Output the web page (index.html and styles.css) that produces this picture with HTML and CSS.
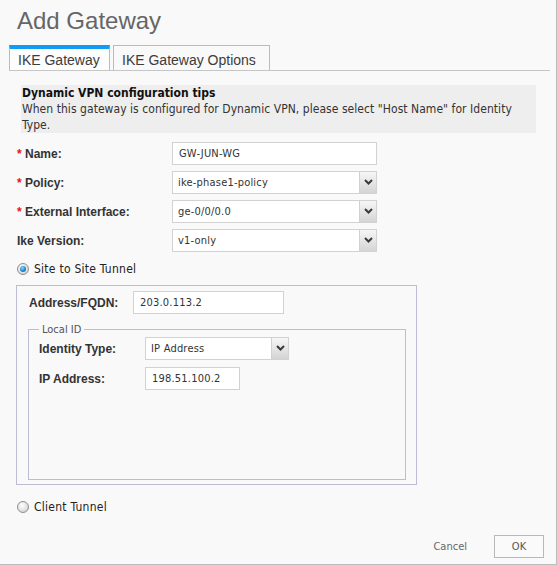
FILE: index.html
```html
<!DOCTYPE html>
<html>
<head>
<meta charset="utf-8">
<link rel="stylesheet" href="styles.css">
</head>
<body>
<div class="dialog">
  <h1 class="title">Add Gateway</h1>
  <div class="tabs">
    <div class="tab tab-active">IKE Gateway</div>
    <div class="tab tab-options">IKE Gateway Options</div>
  </div>
  <div class="tips">
    <div class="tips-title">Dynamic VPN configuration tips</div>
    <div class="tips-text">When this gateway is configured for Dynamic VPN, please select "Host Name" for Identity Type.</div>
  </div>
  <div class="form">
    <div class="row">
      <label class="label"><span class="req">*</span> Name:</label>
      <div class="field input w205">GW-JUN-WG</div>
    </div>
    <div class="row">
      <label class="label"><span class="req">*</span> Policy:</label>
      <div class="field select w205"><span class="value">ike-phase1-policy</span><span class="arrow"><svg width="9" height="6" viewBox="0 0 9 6"><path d="M1 1 L4.5 4.5 L8 1" fill="none" stroke="#3a3a3a" stroke-width="2"/></svg></span></div>
    </div>
    <div class="row">
      <label class="label"><span class="req">*</span> External Interface:</label>
      <div class="field select w205"><span class="value">ge-0/0/0.0</span><span class="arrow"><svg width="9" height="6" viewBox="0 0 9 6"><path d="M1 1 L4.5 4.5 L8 1" fill="none" stroke="#3a3a3a" stroke-width="2"/></svg></span></div>
    </div>
    <div class="row last">
      <label class="label">Ike Version:</label>
      <div class="field select w205"><span class="value">v1-only</span><span class="arrow"><svg width="9" height="6" viewBox="0 0 9 6"><path d="M1 1 L4.5 4.5 L8 1" fill="none" stroke="#3a3a3a" stroke-width="2"/></svg></span></div>
    </div>
  </div>
  <div class="radio-row site"><span class="radio checked"></span><span class="radio-label">Site to Site Tunnel</span></div>
  <div class="group">
    <div class="row addr-row">
      <label class="label addr-label">Address/FQDN:</label>
      <div class="field input w151">203.0.113.2</div>
    </div>
    <fieldset class="localid">
      <legend class="legend">Local ID</legend>
      <div class="row id-row">
        <label class="label id-label">Identity Type:</label>
        <div class="field select w144"><span class="value">IP Address</span><span class="arrow"><svg width="9" height="6" viewBox="0 0 9 6"><path d="M1 1 L4.5 4.5 L8 1" fill="none" stroke="#3a3a3a" stroke-width="2"/></svg></span></div>
      </div>
      <div class="row last">
        <label class="label id-label">IP Address:</label>
        <div class="field input w95">198.51.100.2</div>
      </div>
    </fieldset>
  </div>
  <div class="radio-row client"><span class="radio"></span><span class="radio-label">Client Tunnel</span></div>
  <div class="footer">
    <span class="cancel">Cancel</span>
    <button class="ok">OK</button>
  </div>
</div>
</body>
</html>
```
FILE: styles.css
```css
html, body {
  margin: 0;
  padding: 0;
  background: #f9f9f9;
}
.dialog {
  width: 557px;
  height: 565px;
  box-sizing: border-box;
  background: #f9f9f9;
  border-right: 1px solid #bdbdbd;
  border-bottom: 1px solid #bdbdbd;
  font-family: "DejaVu Sans Condensed", "DejaVu Sans", sans-serif;
  color: #333;
}
.title {
  margin: 0;
  height: 45px;
  box-sizing: border-box;
  padding: 7px 0 0 17px;
  font: 400 24px/28px "Liberation Sans", Arial, sans-serif;
  color: #666;
}
.tabs {
  display: flex;
  gap: 3px;
  margin-left: 9px;
  width: 541px;
  height: 26px;
  box-sizing: border-box;
  border-bottom: 1px solid #c6c6c6;
}
.tab {
  height: 25px;
  box-sizing: border-box;
  border: 1px solid #bbb;
  border-bottom: none;
  padding: 6px 0 0 8px;
  font: 400 14px/16px "Liberation Sans", Arial, sans-serif;
  color: #3c3c3c;
}
.tab-active {
  width: 101px;
  border-top: 4px solid #129bf2;
  padding-top: 3px;
  background: #fdfdfd;
}
.tab-options {
  width: 157px;
}
.tips {
  margin: 14px 0 0 21px;
  width: 515px;
  height: 48px;
  box-sizing: border-box;
  background: #eeeeee;
  padding: 1px 6px 0 1px;
  font-size: 12px;
  line-height: 16px;
  letter-spacing: 0.05px;
  color: #333;
}
.tips-title {
  font-weight: bold;
  color: #111;
  letter-spacing: 0;
  line-height: 15px;
}
.form {
  margin-top: 9px;
  padding-left: 17px;
}
.row {
  display: flex;
  align-items: center;
  height: 23px;
  margin-bottom: 6px;
}
.row.last {
  margin-bottom: 0;
}
.label {
  width: 155px;
  flex: none;
  font: 700 12px/14px "Liberation Sans", Arial, sans-serif;
  color: #333;
}
.req {
  color: #e11;
}
.field {
  height: 23px;
  box-sizing: border-box;
  border: 1px solid #d2d2d2;
  background: #fff;
  font-size: 11px;
  letter-spacing: 0.2px;
  color: #333;
  display: flex;
  align-items: center;
}
.input {
  padding-left: 6px;
}
.select {
  padding-left: 5px;
  align-items: stretch;
}
.select .value {
  flex: 1;
  display: flex;
  align-items: center;
}
.select .arrow {
  width: 17px;
  flex: none;
  border-left: 1px solid #d0d0d0;
  background: linear-gradient(#f6f6f6, #d4d4d4);
  display: flex;
  justify-content: center;
  align-items: flex-start;
  padding-top: 7px;
  box-sizing: border-box;
}
.w205 { width: 205px; }
.w151 { width: 151px; }
.w144 { width: 144px; }
.w95 { width: 95px; }
.radio-row {
  display: flex;
  align-items: center;
  height: 16px;
  padding-left: 17px;
  font-size: 12px;
  letter-spacing: 0.25px;
  color: #222;
}
.radio-row.site {
  margin-top: 9px;
}
.radio-row.client {
  margin-top: 14px;
}
.radio {
  width: 12px;
  height: 12px;
  box-sizing: border-box;
  border-radius: 50%;
  border: 1px solid #8f8f8f;
  background: radial-gradient(circle at 40% 35%, #ffffff, #e2e2e2 55%, #c4c4c4);
  margin-right: 5px;
  display: flex;
  align-items: center;
  justify-content: center;
  flex: none;
}
.radio.checked::after {
  content: "";
  width: 6px;
  height: 6px;
  border-radius: 50%;
  background: radial-gradient(circle at 40% 35%, #8fd8ff, #1e86cc 55%, #0b4c86);
}
.group {
  margin: 8px 0 0 16px;
  width: 401px;
  height: 200px;
  box-sizing: border-box;
  border: 1px solid #bcbcd2;
  padding: 5px 10px 0 11px;
}
.addr-row {
  padding-left: 1px;
}
.addr-label {
  width: 104px;
}
.localid {
  margin: 9px 0 0 0;
  padding: 1px 10px 89px 10px;
  border: 1px solid #bcbcd2;
  min-width: 0;
}
.legend {
  padding: 0 3px;
  font-size: 11px;
  line-height: 13px;
  color: #555;
}
.id-row {
  margin-bottom: 7px;
}
.id-label {
  width: 106px;
}
.footer {
  display: flex;
  justify-content: flex-end;
  align-items: center;
  gap: 27px;
  margin-top: 20px;
  padding-right: 12px;
}
.cancel {
  font-size: 11px;
  color: #666;
}
.ok {
  width: 50px;
  height: 23px;
  box-sizing: border-box;
  border: 1px solid #b8b8b8;
  background: #fafafa;
  font-family: "DejaVu Sans Condensed", "DejaVu Sans", sans-serif;
  font-size: 11px;
  color: #555;
  padding: 0;
}
```
